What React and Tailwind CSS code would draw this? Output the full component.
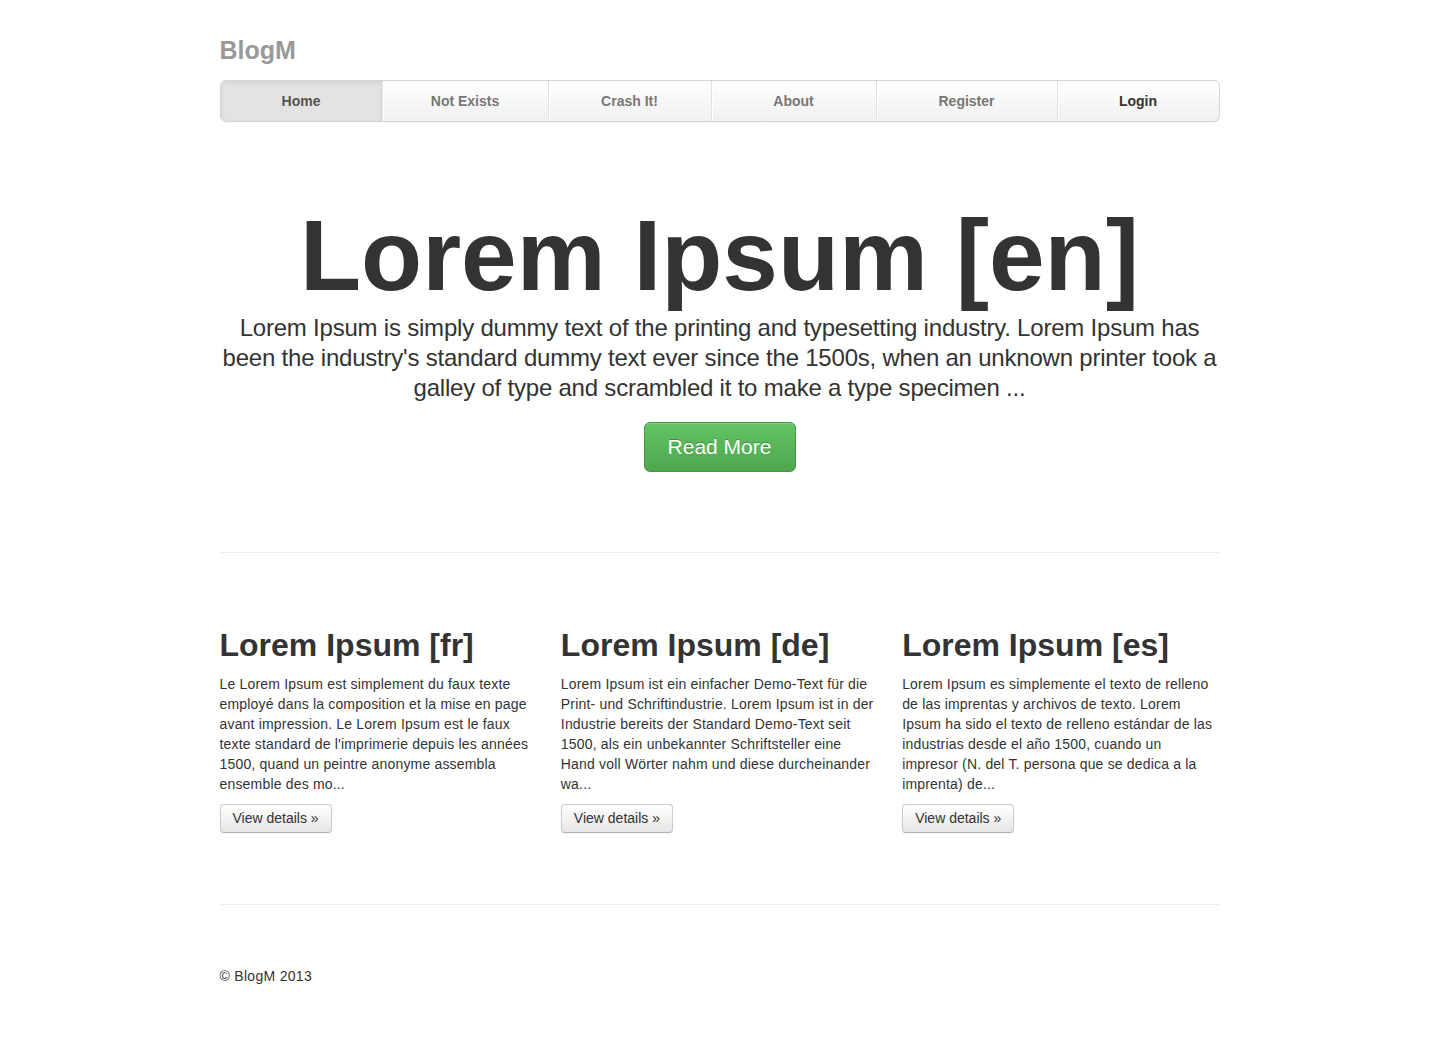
import React from "react";

const navItems = [
  { label: "Home", w: "w-[161px]", active: true, color: "text-[#555]" },
  { label: "Not Exists", w: "w-[166px]", color: "text-[#777]" },
  { label: "Crash It!", w: "w-[163px]", color: "text-[#777]" },
  { label: "About", w: "w-[165px]", color: "text-[#777]" },
  { label: "Register", w: "w-[181px]", color: "text-[#777]" },
  { label: "Login", w: "flex-1", color: "text-[#333]" },
];

const cols = [
  {
    title: "Lorem Ipsum [fr]",
    lines: [
      "Le Lorem Ipsum est simplement du faux texte",
      "employé dans la composition et la mise en page",
      "avant impression. Le Lorem Ipsum est le faux",
      "texte standard de l'imprimerie depuis les années",
      "1500, quand un peintre anonyme assembla",
      "ensemble des mo...",
    ],
  },
  {
    title: "Lorem Ipsum [de]",
    lines: [
      "Lorem Ipsum ist ein einfacher Demo-Text für die",
      "Print- und Schriftindustrie. Lorem Ipsum ist in der",
      "Industrie bereits der Standard Demo-Text seit",
      "1500, als ein unbekannter Schriftsteller eine",
      "Hand voll Wörter nahm und diese durcheinander",
      "wa...",
    ],
  },
  {
    title: "Lorem Ipsum [es]",
    lines: [
      "Lorem Ipsum es simplemente el texto de relleno",
      "de las imprentas y archivos de texto. Lorem",
      "Ipsum ha sido el texto de relleno estándar de las",
      "industrias desde el año 1500, cuando un",
      "impresor (N. del T. persona que se dedica a la",
      "imprenta) de...",
    ],
  },
];

export default function App() {
  return (
    <div
      className="min-h-[1056px] bg-white text-[#333]"
      style={{ fontFamily: '"Liberation Sans", Arial, sans-serif' }}
    >
      <div className="w-[1000px] mx-auto pt-[30px]">
        <div className="h-[40px] leading-[40px] text-[25px] font-bold text-[#999]">
          BlogM
        </div>
        <nav className="mt-[10px] flex h-[42px] rounded-[6px] border border-[#d5d5d5] bg-gradient-to-b from-white to-[#f0f0f0] overflow-hidden shadow-[0_1px_1px_rgba(0,0,0,0.04)]">
          {navItems.map((it, i) => (
            <div
              key={it.label}
              className={
                it.w +
                " flex items-center justify-center text-[14px] font-bold " +
                it.color +
                (i > 0 ? " border-l border-l-[#e2e2e2]" : "") +
                (it.active
                  ? " bg-[#e3e3e3] shadow-[inset_0_2px_5px_rgba(0,0,0,0.08)]"
                  : " shadow-[inset_1px_0_0_#ffffff]")
              }
            >
              {it.label}
            </div>
          ))}
        </nav>

        <div className="text-center">
          <h1 className="mt-[83px] text-[100px] leading-[100px] font-bold text-[#333]">
            Lorem Ipsum [en]
          </h1>
          <p className="mt-[8px] text-[24px] leading-[30px] font-light text-[#333] whitespace-nowrap tracking-[-0.21px]">
            Lorem Ipsum is simply dummy text of the printing and typesetting industry. Lorem Ipsum has
            <br />
            been the industry's standard dummy text ever since the 1500s, when an unknown printer took a
            <br />
            galley of type and scrambled it to make a type specimen ...
          </p>
          <div className="mt-[19px] flex justify-center">
            <button className="w-[152px] h-[50px] rounded-[6px] border border-[#48944a] bg-gradient-to-b from-[#62c462] to-[#4ea64e] text-white text-[21px] [text-shadow:0_-1px_0_rgba(0,0,0,0.25)] shadow-[inset_0_1px_0_rgba(255,255,255,0.2)]">
              Read More
            </button>
          </div>
        </div>

        <hr className="mt-[80px] border-0 border-t border-[#eeeeee]" />

        <div className="mt-[72px] grid grid-cols-3 gap-[24px]">
          {cols.map((c) => (
            <div key={c.title}>
              <h2 className="text-[32px] leading-[40px] font-bold text-[#333] whitespace-nowrap">
                {c.title}
              </h2>
              <p className="mt-[9px] text-[14px] leading-[20px] text-[#333] whitespace-nowrap tracking-[0.18px]">
                {c.lines.map((l, i) => (
                  <React.Fragment key={i}>
                    {l}
                    {i < c.lines.length - 1 && <br />}
                  </React.Fragment>
                ))}
              </p>
              <button className="mt-[10px] h-[29px] px-[12px] rounded-[4px] border border-[#cccccc] border-b-[#b3b3b3] bg-gradient-to-b from-white to-[#e6e6e6] text-[14px] text-[#333] shadow-[0_1px_2px_rgba(0,0,0,0.05)]">
                View details »
              </button>
            </div>
          ))}
        </div>

        <hr className="mt-[71px] border-0 border-t border-[#eeeeee]" />

        <footer className="mt-[61px] text-[14px] leading-[20px] text-[#333] tracking-[0.3px]">
          © BlogM 2013
        </footer>
      </div>
    </div>
  );
}
